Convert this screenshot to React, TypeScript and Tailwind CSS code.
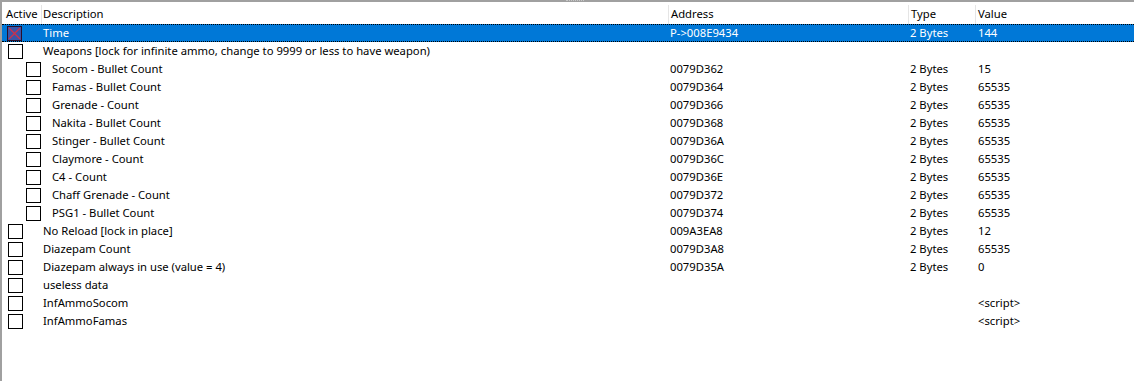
import React from 'react'

interface Entry {
  desc: string;
  address?: string;
  type?: string;
  value?: string;
  child?: boolean;
}

const entries: Entry[] = [
  { desc: 'Weapons [lock for infinite ammo, change to 9999 or less to have weapon)' },
  { desc: 'Socom - Bullet Count', address: '0079D362', type: '2 Bytes', value: '15', child: true },
  { desc: 'Famas - Bullet Count', address: '0079D364', type: '2 Bytes', value: '65535', child: true },
  { desc: 'Grenade - Count', address: '0079D366', type: '2 Bytes', value: '65535', child: true },
  { desc: 'Nakita - Bullet Count', address: '0079D368', type: '2 Bytes', value: '65535', child: true },
  { desc: 'Stinger - Bullet Count', address: '0079D36A', type: '2 Bytes', value: '65535', child: true },
  { desc: 'Claymore - Count', address: '0079D36C', type: '2 Bytes', value: '65535', child: true },
  { desc: 'C4 - Count', address: '0079D36E', type: '2 Bytes', value: '65535', child: true },
  { desc: 'Chaff Grenade - Count', address: '0079D372', type: '2 Bytes', value: '65535', child: true },
  { desc: 'PSG1 - Bullet Count', address: '0079D374', type: '2 Bytes', value: '65535', child: true },
  { desc: 'No Reload [lock in place]', address: '009A3EA8', type: '2 Bytes', value: '12' },
  { desc: 'Diazepam Count', address: '0079D3A8', type: '2 Bytes', value: '65535' },
  { desc: 'Diazepam always in use (value = 4)', address: '0079D35A', type: '2 Bytes', value: '0' },
  { desc: 'useless data' },
  { desc: 'InfAmmoSocom', value: '<script>' },
  { desc: 'InfAmmoFamas', value: '<script>' },
]

const Row = ({ e }: { e: Entry }) => (
  <div className="flex h-[18px] items-center">
    <div className={`flex w-[41px] shrink-0 ${e.child ? 'pl-[24px]' : 'pl-[6px]'}`}>
      <div className="h-[15px] w-[15px] border border-black bg-white" />
    </div>
    <div className={`w-[626px] shrink-0 ${e.child ? 'pl-[9px]' : 'pl-0'}`}>{e.desc}</div>
    <div className="w-[240px] shrink-0 pl-[1px]">{e.address}</div>
    <div className="w-[68px] shrink-0 pl-[1px]">{e.type}</div>
    <div className="pl-[1px]">{e.value}</div>
  </div>
)

export default function App() {
  return (
    <div
      className="relative h-[381px] w-[1134px] overflow-hidden bg-white text-[11.25px] leading-[18px] text-black"
      style={{ fontFamily: '"Noto Sans", "Open Sans", sans-serif' }}
    >
      <div className="h-[2px] w-full bg-[#a0a0a0]" />
      <div className="absolute left-[566px] top-0 h-[3px] w-[18px] border-t border-dotted border-[#c8c8c8]" />
      <div className="flex h-full border-l-2 border-[#a0a0a0]">
        <div className="flex w-full flex-col">
          {/* header */}
          <div className="mt-[3px] flex h-[19px] items-center">
            <div className="h-full w-[40px] shrink-0 border-r border-[#e5e5e5] pl-[4px]">Active</div>
            <div className="h-full w-[627px] shrink-0 border-r border-[#e5e5e5] pl-[1px]">Description</div>
            <div className="h-full w-[240px] shrink-0 border-r border-[#e5e5e5] pl-[2px]">Address</div>
            <div className="h-full w-[67px] shrink-0 border-r border-[#e5e5e5] pl-[2px]">Type</div>
            <div className="h-full pl-[2px]">Value</div>
          </div>
          {/* selected row */}
          <div className="flex h-[18px] items-center border-y border-dotted border-black bg-[#0078d7] text-white">
            <div className="flex w-[41px] shrink-0 pl-[5px]">
              <div className="flex h-[15px] w-[15px] items-center justify-center border border-[#2a0f2a] bg-[#3a55a8]">
                <svg width="13" height="13" viewBox="0 0 13 13">
                  <path d="M1 1L12 12M12 1L1 12" stroke="#d0304a" strokeWidth="1.3" />
                </svg>
              </div>
            </div>
            <div className="w-[626px] shrink-0">Time</div>
            <div className="w-[240px] shrink-0 pl-[1px]">P-&gt;008E9434</div>
            <div className="w-[68px] shrink-0 pl-[1px]">2 Bytes</div>
            <div className="pl-[1px]">144</div>
          </div>
          {entries.map((e, i) => (
            <Row key={i} e={e} />
          ))}
        </div>
      </div>
    </div>
  )
}
